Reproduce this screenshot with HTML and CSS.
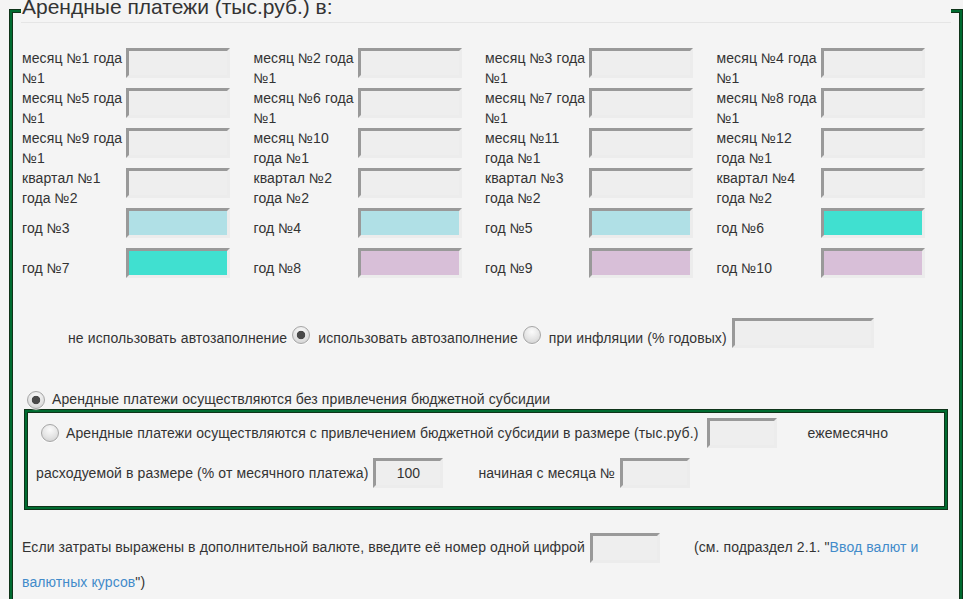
FILE: index.html
```html
<!DOCTYPE html>
<html lang="ru">
<head>
<meta charset="utf-8">
<title>Арендные платежи</title>
<link rel="stylesheet" href="styles.css">
</head>
<body>
<div class="page">
  <section class="panel">
    <h2 class="panel-title">Арендные платежи (тыс.руб.) в:</h2>

    <div class="grid">
      <div class="cell"><label class="cell-label">месяц №1 года №1</label><input class="field" type="text"></div>
      <div class="cell"><label class="cell-label">месяц №2 года №1</label><input class="field" type="text"></div>
      <div class="cell"><label class="cell-label">месяц №3 года №1</label><input class="field" type="text"></div>
      <div class="cell"><label class="cell-label">месяц №4 года №1</label><input class="field" type="text"></div>

      <div class="cell"><label class="cell-label">месяц №5 года №1</label><input class="field" type="text"></div>
      <div class="cell"><label class="cell-label">месяц №6 года №1</label><input class="field" type="text"></div>
      <div class="cell"><label class="cell-label">месяц №7 года №1</label><input class="field" type="text"></div>
      <div class="cell"><label class="cell-label">месяц №8 года №1</label><input class="field" type="text"></div>

      <div class="cell"><label class="cell-label">месяц №9 года №1</label><input class="field" type="text"></div>
      <div class="cell"><label class="cell-label">месяц №10 года №1</label><input class="field" type="text"></div>
      <div class="cell"><label class="cell-label">месяц №11 года №1</label><input class="field" type="text"></div>
      <div class="cell"><label class="cell-label">месяц №12 года №1</label><input class="field" type="text"></div>

      <div class="cell"><label class="cell-label">квартал №1 года №2</label><input class="field" type="text"></div>
      <div class="cell"><label class="cell-label">квартал №2 года №2</label><input class="field" type="text"></div>
      <div class="cell"><label class="cell-label">квартал №3 года №2</label><input class="field" type="text"></div>
      <div class="cell"><label class="cell-label">квартал №4 года №2</label><input class="field" type="text"></div>

      <div class="cell"><label class="cell-label">год №3</label><input class="field field-blue" type="text"></div>
      <div class="cell"><label class="cell-label">год №4</label><input class="field field-blue" type="text"></div>
      <div class="cell"><label class="cell-label">год №5</label><input class="field field-blue" type="text"></div>
      <div class="cell"><label class="cell-label">год №6</label><input class="field field-turq" type="text"></div>

      <div class="cell"><label class="cell-label">год №7</label><input class="field field-turq" type="text"></div>
      <div class="cell"><label class="cell-label">год №8</label><input class="field field-thistle" type="text"></div>
      <div class="cell"><label class="cell-label">год №9</label><input class="field field-thistle" type="text"></div>
      <div class="cell"><label class="cell-label">год №10</label><input class="field field-thistle" type="text"></div>
    </div>

    <div class="auto-row">
      <span class="opt">не использовать автозаполнение</span>
      <input type="radio" name="auto" class="radio" checked>
      <span class="opt">использовать автозаполнение</span>
      <input type="radio" name="auto" class="radio">
      <span class="opt">при инфляции (% годовых)</span>
      <input class="field field-inflation" type="text">
    </div>

    <div class="subsidy-row">
      <input type="radio" name="subsidy" class="radio" checked>
      <span>Арендные платежи осуществляются без привлечения бюджетной субсидии</span>
    </div>

    <div class="subsidy-box">
      <div class="box-row">
        <input type="radio" name="subsidy" class="radio">
        <span>Арендные платежи осуществляются с привлечением бюджетной субсидии в размере (тыс.руб.)</span>
        <input class="field field-small field-gap9" type="text">
        <span class="gap30">ежемесячно</span>
      </div>
      <div class="box-row box-row-2">
        <span>расходуемой в размере (% от месячного платежа)</span>
        <input class="field field-small field-gap5 field-center" type="text" value="100">
        <span class="gap35">начиная с месяца №</span>
        <input class="field field-small field-gap5" type="text">
      </div>
    </div>

    <p class="currency">Если затраты выражены в дополнительной валюте, введите её номер одной цифрой<input class="field field-small field-inline" type="text">(см. подраздел 2.1. "<a class="link" href="#">Ввод валют и валютных курсов</a>")</p>
  </section>
</div>
</body>
</html>
```

FILE: styles.css
```css
* {
  box-sizing: border-box;
}

html,
body {
  margin: 0;
  padding: 0;
}

body {
  background: #ffffff;
  font-family: "Liberation Sans", Arial, sans-serif;
  font-size: 14px;
  line-height: 20px;
  letter-spacing: 0.1px;
  color: #333333;
}

.page {
  width: 963px;
  height: 599px;
  overflow: hidden;
  background: #f4f4f4;
  padding: 9px 0 0 9px;
}

.panel {
  width: 954px;
  min-height: 640px;
  border: 1px solid #0f3319;
  box-shadow: inset 0 0 0 2px #006b30, inset 0 0 0 3px #0f3319;
  padding: 0 11px 20px 11px;
}

.panel-title {
  margin: -18px 0 25px 0;
  padding: 0 0 0 1px;
  font-size: 21px;
  font-weight: normal;
  line-height: 30px;
  letter-spacing: 0;
  color: #333333;
  border-bottom: 1px solid #e5e5e5;
  background: #f4f4f4;
}

.grid {
  width: 926px;
  display: grid;
  grid-template-columns: repeat(4, 1fr);
}

.cell {
  display: flex;
  align-items: flex-start;
}

.cell-label {
  width: 105px;
  min-height: 40px;
  display: flex;
  align-items: center;
  padding-left: 1px;
}

.field {
  width: 104px;
  height: 30px;
  margin: 0;
  padding: 0 4px;
  border: 3px solid;
  border-color: #999999 #ececec #ececec #999999;
  background: #eeeeee;
  font: inherit;
  color: #333333;
  outline: none;
  flex: none;
}

.field-blue {
  background: #b0e0e6;
}

.field-turq {
  background: #40e0d0;
}

.field-thistle {
  background: #d8bfd8;
}

.field-inflation {
  width: 142px;
  margin-left: 5px;
}

.field-small {
  width: 70px;
}

.field-gap9 {
  margin-left: 9px;
}

.field-gap5 {
  margin-left: 5px;
}

.field-center {
  text-align: center;
}

.radio {
  -webkit-appearance: none;
  appearance: none;
  width: 18px;
  height: 18px;
  margin: 0;
  border-radius: 50%;
  border: 1px solid #a6a6a6;
  background: radial-gradient(circle at 50% 30%, #fbfbfb 0, #e4e4e4 55%, #cbcbcb 100%);
  box-shadow: 0 1px 1px rgba(255, 255, 255, 0.8);
  flex: none;
  outline: none;
}

.radio:checked {
  background:
    radial-gradient(circle, #4a4a4a 0, #4a4a4a 3.8px, rgba(74, 74, 74, 0) 4.6px),
    radial-gradient(circle at 50% 30%, #fbfbfb 0, #e4e4e4 55%, #cbcbcb 100%);
}

.auto-row {
  display: flex;
  align-items: flex-end;
  height: 30px;
  margin: 30px 0 0 47px;
}

.auto-row .radio {
  margin: 0 8px 4px 5px;
}

.subsidy-row {
  display: flex;
  align-items: center;
  height: 20px;
  margin-top: 41px;
}

.subsidy-row .radio {
  margin: 1px 7px 0 6px;
}

.subsidy-box {
  margin: 0 3px;
  border: 1px solid #0f3319;
  box-shadow: inset 0 0 0 2px #006b30, inset 0 0 0 3px #0f3319;
  padding: 8px 11px 21px 11px;
}

.box-row {
  display: flex;
  align-items: center;
  height: 30px;
}

.box-row .radio {
  margin: 0 7px 0 5px;
}

.box-row-2 {
  margin-top: 10px;
}

.gap30 {
  margin-left: 30px;
}

.gap35 {
  margin-left: 35px;
}

.currency {
  margin: 20px 0 0 0;
  line-height: 35px;
  padding-left: 1px;
}

.field-inline {
  display: inline-block;
  vertical-align: middle;
  margin: 0 34px 0 5px;
}

.link {
  color: #428bca;
  text-decoration: none;
}
```
